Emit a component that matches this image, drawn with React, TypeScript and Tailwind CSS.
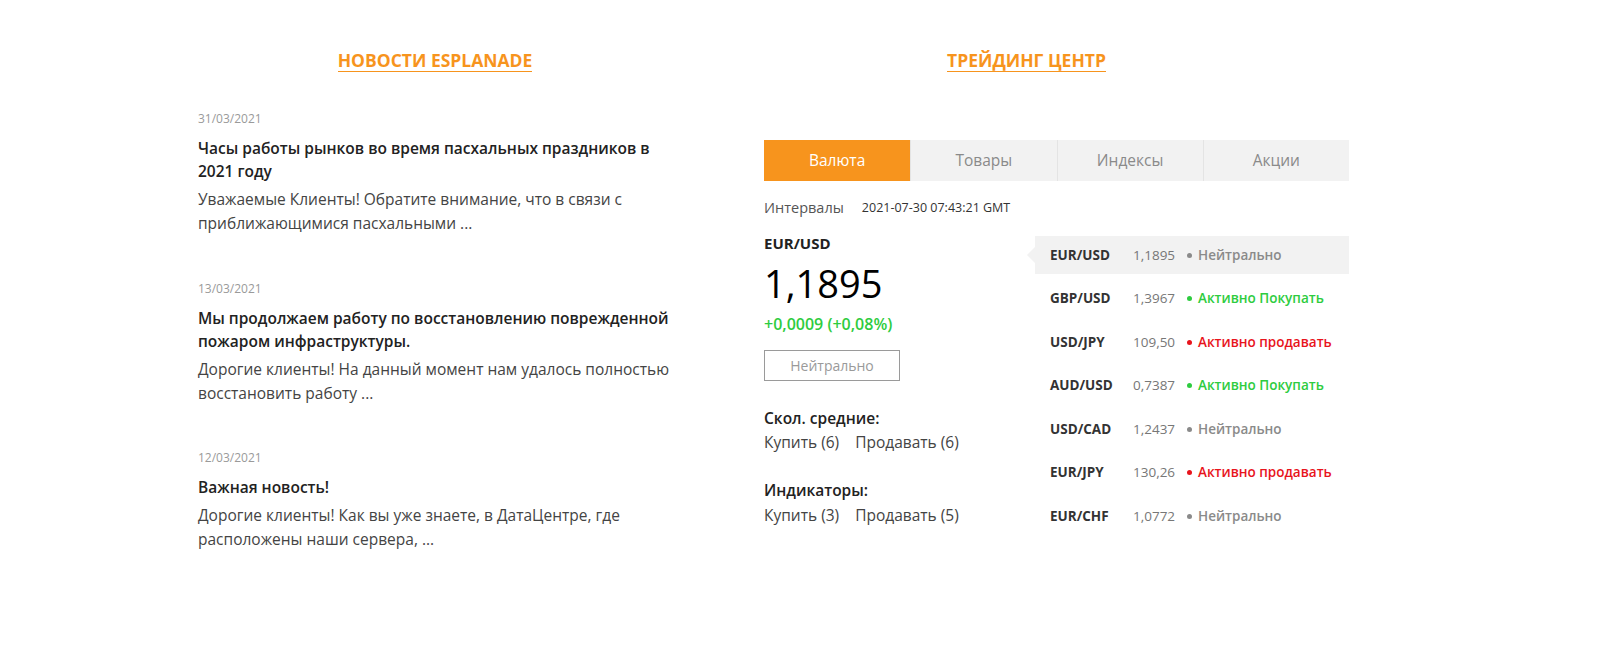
import type { JSX } from 'react';

interface NewsItem {
  date: string;
  title: string;
  excerpt: string;
}

interface Quote {
  pair: string;
  value: string;
  status: 'neutral' | 'buy' | 'sell';
}

const NEWS: NewsItem[] = [
  {
    date: '31/03/2021',
    title: 'Часы работы рынков во время пасхальных праздников в 2021 году',
    excerpt: 'Уважаемые Клиенты! Обратите внимание, что в связи с приближающимися пасхальными ...',
  },
  {
    date: '13/03/2021',
    title: 'Мы продолжаем работу по восстановлению поврежденной пожаром инфраструктуры.',
    excerpt: 'Дорогие клиенты! На данный момент нам удалось полностью восстановить работу ...',
  },
  {
    date: '12/03/2021',
    title: 'Важная новость!',
    excerpt: 'Дорогие клиенты! Как вы уже знаете, в ДатаЦентре, где расположены наши сервера, ...',
  },
];

const QUOTES: Quote[] = [
  { pair: 'EUR/USD', value: '1,1895', status: 'neutral' },
  { pair: 'GBP/USD', value: '1,3967', status: 'buy' },
  { pair: 'USD/JPY', value: '109,50', status: 'sell' },
  { pair: 'AUD/USD', value: '0,7387', status: 'buy' },
  { pair: 'USD/CAD', value: '1,2437', status: 'neutral' },
  { pair: 'EUR/JPY', value: '130,26', status: 'sell' },
  { pair: 'EUR/CHF', value: '1,0772', status: 'neutral' },
];

const STATUS = {
  neutral: { label: 'Нейтрально', text: 'text-[#8a8a8a]', dot: 'bg-[#8a8a8a]' },
  buy: { label: 'Активно Покупать', text: 'text-[#2ecc40]', dot: 'bg-[#2ecc40]' },
  sell: { label: 'Активно продавать', text: 'text-[#e8141c]', dot: 'bg-[#e8141c]' },
};

const TABS = ['Валюта', 'Товары', 'Индексы', 'Акции'];

function SectionTitle({ children }: { children: string }): JSX.Element {
  return (
    <div className="flex justify-center">
      <h2 className="text-[17.5px] leading-[22px] font-bold uppercase text-[#f7941d] border-b border-[#f7941d]">
        {children}
      </h2>
    </div>
  );
}

export default function App(): JSX.Element {
  return (
    <div
      className="w-full min-h-[647px] bg-white pt-[49px] pl-[198px] flex"
      style={{ fontFamily: '"Open Sans", "Noto Sans", sans-serif' }}
    >
      {/* News column */}
      <div className="w-[474px]">
        <SectionTitle>Новости Esplanade</SectionTitle>
        <div className="mt-[39px] flex flex-col gap-[45.5px] w-[480px]">
          {NEWS.map((item) => (
            <div key={item.date}>
              <p className="text-[12px] leading-[16px] text-[#9a9a9a]">{item.date}</p>
              <h3 className="mt-[10px] text-[15.5px] leading-[23px] font-semibold text-[#222]">{item.title}</h3>
              <p className="mt-[4px] text-[15.5px] leading-[24px] text-[#444]">{item.excerpt}</p>
            </div>
          ))}
        </div>
      </div>

      {/* Trading center column */}
      <div className="ml-[32px] w-[645px]">
        <SectionTitle>Трейдинг центр</SectionTitle>
        <div className="pl-[60px]">
          {/* Tabs */}
          <div className="mt-[68px] grid grid-cols-4 h-[41px] bg-[#f2f2f2]">
            {TABS.map((tab, i) => (
              <div
                key={tab}
                className={
                  i === 0
                    ? 'flex items-center justify-center bg-[#f7941d] text-white text-[15.5px]'
                    : 'flex items-center justify-center text-[#8a8a8a] text-[15.5px] border-l border-[#e4e4e4]'
                }
              >
                {tab}
              </div>
            ))}
          </div>

          <div className="mt-[17px] flex items-center gap-[18px] h-[20px]">
            <span className="text-[14.5px] text-[#555]">Интервалы</span>
            <span className="text-[12.5px] text-[#333]">2021-07-30 07:43:21 GMT</span>
          </div>

          <div className="mt-[15px] flex items-start">
            {/* Selected pair */}
            <div className="w-[263px]">
              <p className="text-[15px] leading-[20px] font-bold text-[#222]">EUR/USD</p>
              <p className="mt-[7px] text-[38px] leading-[46px] text-black">1,1895</p>
              <p className="mt-[8px] text-[16px] leading-[20px] font-semibold text-[#2ecc40]">+0,0009 (+0,08%)</p>
              <div className="mt-[16px] w-[136px] h-[31px] border border-[#9a9a9a] flex items-center justify-center text-[14px] text-[#9a9a9a]">
                Нейтрально
              </div>
              <p className="mt-[25px] text-[15.5px] leading-[24px] font-semibold text-[#222]">Скол. средние:</p>
              <p className="text-[15.5px] leading-[24px] text-[#444]">
                Купить (6)<span className="ml-[16px]">Продавать (6)</span>
              </p>
              <p className="mt-[24px] text-[15.5px] leading-[24px] font-semibold text-[#222]">Индикаторы:</p>
              <p className="mt-[1px] text-[15.5px] leading-[24px] text-[#444]">
                Купить (3)<span className="ml-[16px]">Продавать (5)</span>
              </p>
            </div>

            {/* Quotes list */}
            <div className="mt-[3px] ml-[8px] flex-1 flex flex-col gap-[5.5px]">
              {QUOTES.map((q, i) => {
                const s = STATUS[q.status];
                return (
                  <div
                    key={q.pair}
                    className={`relative h-[38px] pl-[15px] flex items-center text-[13.5px] ${i === 0 ? 'bg-[#f2f2f2]' : ''}`}
                  >
                    {i === 0 && (
                      <span className="absolute left-[-8px] top-1/2 -translate-y-1/2 w-0 h-0 border-y-[8px] border-y-transparent border-r-[8px] border-r-[#f2f2f2]" />
                    )}
                    <span className="w-[83px] font-bold text-[#333]">{q.pair}</span>
                    <span className="w-[54px] text-[#777]">{q.value}</span>
                    <span className={`w-[5px] h-[5px] rounded-full shrink-0 ${s.dot}`} />
                    <span className={`ml-[6px] font-semibold ${s.text}`}>{s.label}</span>
                  </div>
                );
              })}
            </div>
          </div>
        </div>
      </div>
    </div>
  );
}
